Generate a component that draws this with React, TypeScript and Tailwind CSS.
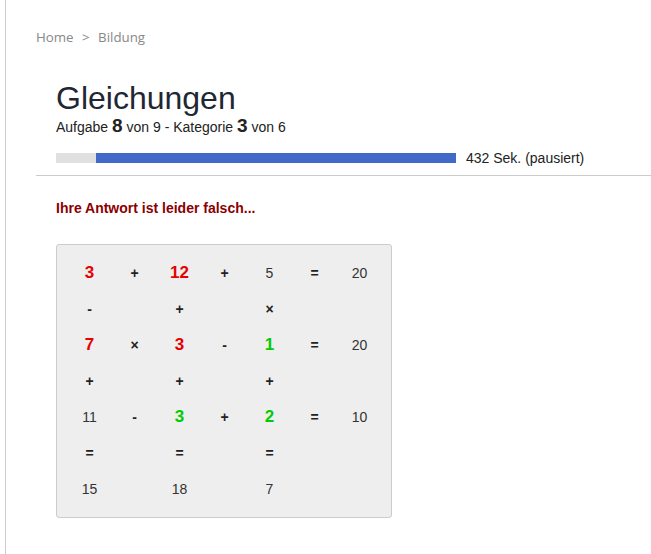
import React from 'react'

type Cell = { t: string; c?: 'red' | 'green' | 'op' | 'num' }

const rows: Cell[][] = [
  [{ t: '3', c: 'red' }, { t: '+', c: 'op' }, { t: '12', c: 'red' }, { t: '+', c: 'op' }, { t: '5', c: 'num' }, { t: '=', c: 'op' }, { t: '20', c: 'num' }],
  [{ t: '-', c: 'op' }, { t: '' }, { t: '+', c: 'op' }, { t: '' }, { t: '×', c: 'op' }, { t: '' }, { t: '' }],
  [{ t: '7', c: 'red' }, { t: '×', c: 'op' }, { t: '3', c: 'red' }, { t: '-', c: 'op' }, { t: '1', c: 'green' }, { t: '=', c: 'op' }, { t: '20', c: 'num' }],
  [{ t: '+', c: 'op' }, { t: '' }, { t: '+', c: 'op' }, { t: '' }, { t: '+', c: 'op' }, { t: '' }, { t: '' }],
  [{ t: '11', c: 'num' }, { t: '-', c: 'op' }, { t: '3', c: 'green' }, { t: '+', c: 'op' }, { t: '2', c: 'green' }, { t: '=', c: 'op' }, { t: '10', c: 'num' }],
  [{ t: '=', c: 'op' }, { t: '' }, { t: '=', c: 'op' }, { t: '' }, { t: '=', c: 'op' }, { t: '' }, { t: '' }],
  [{ t: '15', c: 'num' }, { t: '' }, { t: '18', c: 'num' }, { t: '' }, { t: '7', c: 'num' }, { t: '' }, { t: '' }],
]

function cellClass(c?: Cell['c']) {
  if (c === 'red') return 'text-[17px] font-bold text-[#e60000]'
  if (c === 'green') return 'text-[17px] font-bold text-[#00cc00]'
  if (c === 'op') return 'text-[14px] font-bold text-[#222]'
  return 'text-[14px] text-[#333]'
}

export default function App() {
  return (
    <div className="min-h-screen bg-white font-['Liberation_Sans',Arial,sans-serif]">
      <div className="ml-[5px] min-h-screen border-l border-[#cccccc] pt-[27px]">
        {/* Breadcrumb */}
        <div className="pl-[30px] font-['Open_Sans',sans-serif] text-[13.3px] leading-[20px] text-[#888]">
          Home <span className="mx-[5px]">&gt;</span> Bildung
        </div>

        {/* Header */}
        <div className="mt-[33px] pl-[50px]">
          <h1 className="text-[32px] leading-[36px] text-[#1f2733]">Gleichungen</h1>
          <div className="text-[14px] leading-[20px] text-[#222]">
            Aufgabe <b className="text-[19px]">8</b> von 9 - Kategorie <b className="text-[19px]">3</b> von 6
          </div>
          <div className="mt-[13px] flex items-center">
            <div className="flex h-[10px] w-[400px] bg-[#e0e0e0]">
              <div className="ml-[40px] h-full flex-1 bg-[#4169c8]" />
            </div>
            <span className="ml-[10px] text-[14px] leading-[16px] text-[#222]">432 Sek. (pausiert)</span>
          </div>
        </div>
        <div className="ml-[30px] mt-[9px] border-t border-[#cccccc]" />

        {/* Result */}
        <div className="pl-[50px]">
          <p className="mt-[23px] text-[14px] font-bold leading-[18px] text-[#8b0000]">
            Ihre Antwort ist leider falsch...
          </p>
          <div className="mt-[27px] w-[336px] rounded-[3px] border border-[#cccccc] bg-[#eeeeee] px-[10px] py-[10px]">
            <div className="grid grid-cols-[repeat(7,45px)]">
              {rows.map((row, i) =>
                row.map((cell, j) => (
                  <div key={`${i}-${j}`} className={`flex h-[36px] items-center justify-center ${cellClass(cell.c)}`}>
                    {cell.t}
                  </div>
                ))
              )}
            </div>
          </div>
        </div>
      </div>
    </div>
  )
}
